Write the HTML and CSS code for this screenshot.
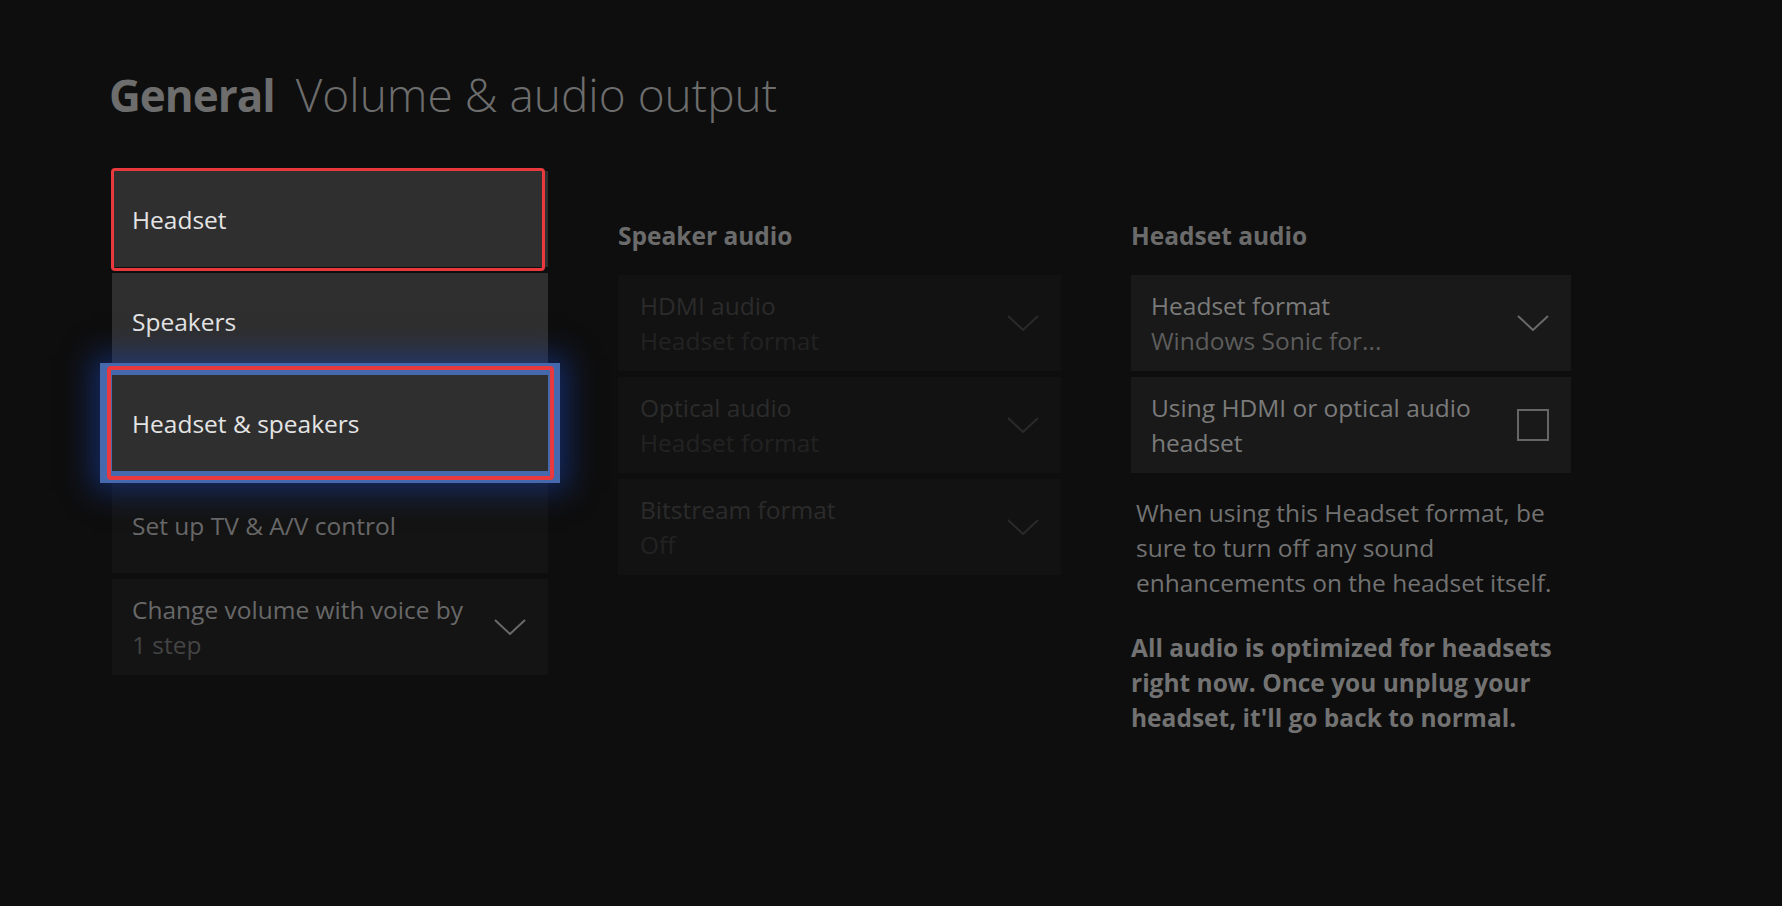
FILE: index.html
```html
<!DOCTYPE html>
<html lang="en">
<head>
  <meta charset="UTF-8">
  <title>Settings - Volume &amp; audio output</title>
  <link rel="stylesheet" href="styles.css">
</head>
<body>
<main class="page">
  <h1 class="title"><b>General</b> <span>Volume &amp; audio output</span></h1>

  <div class="columns">
    <!-- left: output picker (open) + other options -->
    <div class="col">
      <div class="item open marked">Headset</div>
      <div class="item open">Speakers</div>
      <div class="item open focused">Headset &amp; speakers</div>
      <div class="item dim">Set up TV &amp; A/V control</div>
      <div class="item dim two">
        <div class="label">Change volume with voice by<small>1 step</small></div>
        <svg class="chev" viewBox="0 0 32 16"><polyline points="1,1 16,15 31,1"/></svg>
      </div>
    </div>

    <div class="col side">
      <h2 class="head">Speaker audio</h2>
      <div class="item off two">
        <div class="label">HDMI audio<small>Headset format</small></div>
        <svg class="chev" viewBox="0 0 32 16"><polyline points="1,1 16,15 31,1"/></svg>
      </div>
      <div class="item off two">
        <div class="label">Optical audio<small>Headset format</small></div>
        <svg class="chev" viewBox="0 0 32 16"><polyline points="1,1 16,15 31,1"/></svg>
      </div>
      <div class="item off two">
        <div class="label">Bitstream format<small>Off</small></div>
        <svg class="chev" viewBox="0 0 32 16"><polyline points="1,1 16,15 31,1"/></svg>
      </div>
    </div>

    <div class="col side">
      <h2 class="head">Headset audio</h2>
      <div class="item soft two">
        <div class="label">Headset format<small>Windows Sonic for...</small></div>
        <svg class="chev" viewBox="0 0 32 16"><polyline points="1,1 16,15 31,1"/></svg>
      </div>
      <div class="item soft two">
        <div class="label">Using HDMI or optical audio<br>headset</div>
        <span class="check"></span>
      </div>
      <p class="note">When using this Headset format, be sure to turn off any sound enhancements on the headset itself.</p>
      <p class="note strong">All audio is optimized for headsets right now. Once you unplug your headset, it'll go back to normal.</p>
    </div>
  </div>
</main>
</body>
</html>
```

FILE: styles.css
```css
* { box-sizing: border-box; }
html, body { margin: 0; padding: 0; }
body { background-color: #0e0e0e; font-family: 'Open Sans', 'Noto Sans', sans-serif; color: #6e6e6e; width: 1782px; height: 906px; overflow: hidden; }

.page { padding: 64px 0 0 112px; }
.title { margin: 0 0 0 -3px; font-size: 46px; line-height: 60px; font-weight: 300; color: #6d6d6d; white-space: nowrap; }
.title b { font-size: 44px; font-weight: 700; letter-spacing: -1px; margin-right: 9px; }

.columns { display: grid; grid-template-columns: 436px 443px 440px; column-gap: 70px; align-items: start; margin-top: 46px; }
.col { display: flex; flex-direction: column; gap: 6px; }
.col.side { padding-top: 49px; }

.head { margin: 0 0 18px; font-size: 24.5px; line-height: 31px; font-weight: 700; color: #6b6b6b; }

.item { position: relative; height: 96px; display: flex; align-items: center; justify-content: space-between; padding: 0 22px 0 20px; font-size: 24.5px; line-height: 35px; }
.item .label small { display: block; font-size: 24.5px; }
.item .chev { width: 32px; height: 16px; flex-shrink: 0; fill: none; stroke: currentColor; stroke-width: 2; }

.item.open { background-color: #2f2f2f; color: #e4e4e4; }
.item.dim { background-color: #141414; color: #686868; }
.item.dim small { color: #444; }
.item.off { background-color: #121212; color: #2b2b2b; padding-left: 22px; }
.item.off small { color: #222; }
.item.off .chev { color: #2a2a2a; }
.item.soft { background-color: #191919; color: #7b7b7b; }
.item.soft small { color: #5c5c5c; }
.item.soft .chev { color: #6a6a6a; }
.item.dim .chev { color: #6a6a6a; }

/* focus ring on the current option */
.item.focused { z-index: 2; box-shadow: 0 0 0 12px #4669ae, 0 0 28px 20px rgba(24, 64, 170, 0.55); }

/* red annotation boxes */
.item.marked::after, .item.focused::after { content: ""; position: absolute; border: 3px solid #e8393e; border-radius: 4px; pointer-events: none; }
.item.marked::after { top: -3px; left: -1px; right: 3px; bottom: -4px; }
.item.focused::after { top: -9px; left: -5px; right: -6px; bottom: -9px; border-width: 4px; }

.check { width: 32px; height: 32px; border: 2px solid #666; flex-shrink: 0; }

.note { margin: 16px 0 0; padding-left: 5px; font-size: 24.5px; line-height: 35px; color: #727272; }
.note.strong { margin-top: 24px; padding-left: 0; font-weight: 700; color: #727272; }
```
